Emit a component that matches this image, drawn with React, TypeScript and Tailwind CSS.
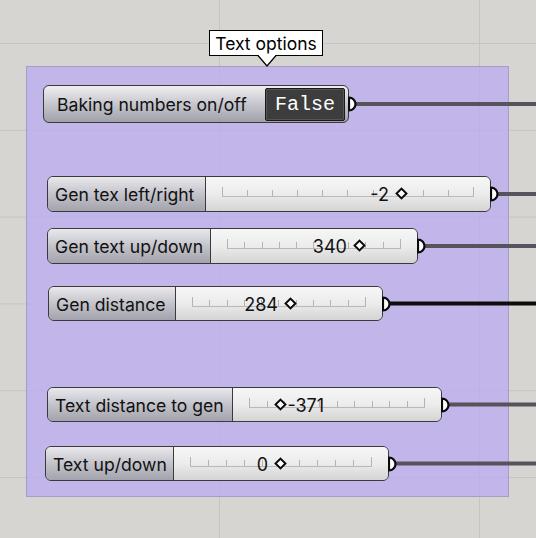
import React from "react";

type SliderNode = {
  label: string;
  box: string; // position + size on the canvas
  labelW: string;
  right: number;
  midY: number;
  grip: number; // 0..1 along the rail
  value: string;
  valueSide: "left" | "right";
  wire: string;
};

const sliders: SliderNode[] = [
  { label: "Gen tex left/right", box: "left-[47px] top-[176px] w-[444px] h-[36px]", labelW: "w-[158px]", right: 491, midY: 194, grip: 0.714, value: "-2", valueSide: "left", wire: "#57535c" },
  { label: "Gen text up/down", box: "left-[47px] top-[228px] w-[371px] h-[36px]", labelW: "w-[163px]", right: 418, midY: 246, grip: 0.764, value: "340", valueSide: "left", wire: "#57535c" },
  { label: "Gen distance", box: "left-[48px] top-[286px] w-[335px] h-[35px]", labelW: "w-[127px]", right: 383, midY: 303.5, grip: 0.569, value: "284", valueSide: "left", wire: "#0d0d0d" },
  { label: "Text distance to gen", box: "left-[47px] top-[387px] w-[395px] h-[35px]", labelW: "w-[185px]", right: 442, midY: 404.5, grip: 0.184, value: "-371", valueSide: "right", wire: "#57535c" },
  { label: "Text up/down", box: "left-[45px] top-[446px] w-[344px] h-[35px]", labelW: "w-[128px]", right: 389, midY: 463.5, grip: 0.5, value: "0", valueSide: "left", wire: "#57535c" },
];

const sans = "font-['Inter','Liberation_Sans',sans-serif]";

function Port() {
  return (
    <svg className="absolute left-full top-1/2 -translate-y-1/2 -ml-px" width="10" height="16" viewBox="0 0 10 16">
      <path d="M1 1.5 A6.5 6.5 0 0 1 1 14.5 Z" fill="#ffffff" stroke="#0a0a0a" strokeWidth="2.2" />
    </svg>
  );
}

function Rail() {
  return (
    <div className="relative h-[9px] flex justify-between items-end border-b border-[#b9b9b9]">
      {Array.from({ length: 11 }, (_, i) => (
        <div key={i} className={`w-px bg-[#b3b3b3] ${i === 0 || i === 10 ? "h-[9px]" : "h-[6px]"}`} />
      ))}
    </div>
  );
}

function Slider({ n }: { n: SliderNode }) {
  return (
    <div className={`absolute ${n.box}`}>
      <div className="flex h-full rounded-[6px] border border-[#3a3a3a] overflow-hidden">
        <div
          className={`${n.labelW} shrink-0 flex items-center pl-[7px] pt-[3px] text-[17.6px] text-[#111] bg-gradient-to-b from-[#e9e9ec] via-[#c3c3cb] to-[#a3a3ad] border-r border-[#3a3a3a] whitespace-nowrap ${sans}`}
        >
          {n.label}
        </div>
        <div className="relative flex-1 flex flex-col justify-center px-4 pb-[3px] bg-gradient-to-b from-[#f6f6f6] via-[#ececec] to-[#d4d4d4]">
          <Rail />
          <div className="absolute inset-x-4 top-1/2">
            <div className="absolute top-0 w-0 h-0" style={{ left: `${n.grip * 100}%` }}>
              <div className="absolute -left-[5px] -top-[5px] w-[9px] h-[9px] rotate-45 bg-white border-2 border-[#0a0a0a]" />
              <div
                className={`absolute -top-[8px] text-[18px] leading-none text-[#111] whitespace-nowrap ${sans} ${
                  n.valueSide === "left" ? "right-[13px]" : "left-[6px]"
                }`}
              >
                {n.value}
              </div>
            </div>
          </div>
        </div>
      </div>
      <Port />
    </div>
  );
}

export default function App() {
  const wires = [
    { x: 355, y: 104, c: "#57535c" },
    ...sliders.map((s) => ({ x: s.right + 6, y: s.midY, c: s.wire })),
  ];

  return (
    <div className="relative w-[536px] h-[538px] overflow-hidden bg-[#d7d5d1] bg-[linear-gradient(to_bottom,#c6c4c0_1px,transparent_1px),linear-gradient(to_right,#c6c4c0_1px,transparent_1px)] bg-[size:100%_86.8px,260px_100%] bg-[position:0_43px,219px_0]">
      {/* group */}
      <div className="absolute left-[26px] top-[66px] w-[483px] h-[431px] bg-[rgba(189,173,240,0.8)] border border-[#a99cc9]" />

      {/* wires */}
      <svg className="absolute left-0 top-0" width="536" height="538">
        {wires.map((w, i) => (
          <line key={i} x1={w.x} y1={w.y} x2="540" y2={w.y} stroke={w.c} strokeWidth="4" />
        ))}
      </svg>

      {/* group tooltip */}
      <div className="absolute left-[209px] top-[30px] w-[114px]">
        <div className={`h-[26px] pt-[2px] bg-white border border-black flex items-center justify-center text-[17.5px] text-black ${sans}`}>
          Text options
        </div>
        <svg className="absolute left-[48px] top-[24px]" width="20" height="14" viewBox="0 0 20 14">
          <path d="M1 1.5 L10 12 L19 1.5" fill="#ffffff" stroke="#000" strokeWidth="1.2" />
          <rect x="2" y="0" width="16" height="2" fill="#ffffff" />
        </svg>
      </div>

      {/* boolean toggle */}
      <div className="absolute left-[43px] top-[85px] w-[306px] h-[38px]">
        <div className="h-full flex items-center rounded-[6px] border border-[#3a3a3a] bg-gradient-to-b from-[#f0f0f2] via-[#c6c6cd] to-[#a1a1ab]">
          <div className={`flex-1 pl-[13px] pt-[3px] text-[17.6px] text-[#111] whitespace-nowrap ${sans}`}>Baking numbers on/off</div>
          <div className="mr-[3px] w-[80px] h-[33px] bg-[#3d3d3d] border border-[#1a1a1a] rounded-[2px] flex items-center justify-center pt-[2px] text-[20px] text-white shadow-[inset_0_0_0_1px_#555] font-['Liberation_Mono',monospace]">
            False
          </div>
        </div>
        <Port />
      </div>

      {sliders.map((s) => (
        <Slider key={s.label} n={s} />
      ))}
    </div>
  );
}
